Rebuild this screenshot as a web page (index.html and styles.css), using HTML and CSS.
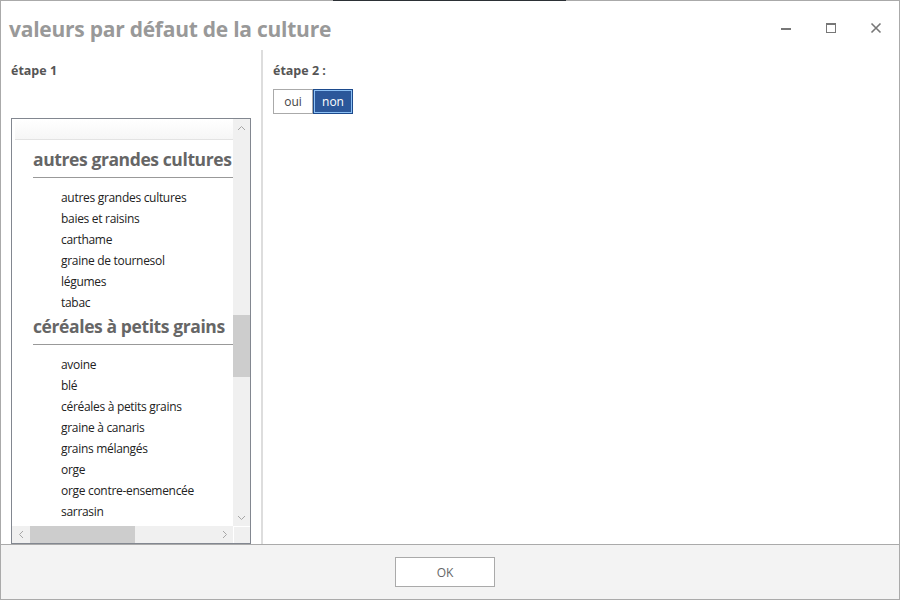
FILE: index.html
```html
<!DOCTYPE html>
<html lang="fr">
<head>
<meta charset="utf-8">
<title>valeurs par défaut de la culture</title>
<link rel="stylesheet" href="styles.css">
</head>
<body>
<div class="window">
  <div class="topedge"></div>
  <header class="titlebar">
    <h1 class="title">valeurs par défaut de la culture</h1>
    <div class="controls">
      <span class="ctl"><svg width="12" height="12" viewBox="0 0 12 12"><rect x="1" y="6" width="10" height="2" fill="#777"/></svg></span>
      <span class="ctl"><svg width="12" height="12" viewBox="0 0 12 12"><rect x="1.5" y="1.5" width="9" height="9" fill="none" stroke="#777"/><rect x="1" y="1" width="10" height="2" fill="#777"/></svg></span>
      <span class="ctl"><svg width="12" height="12" viewBox="0 0 12 12"><path d="M1.5 1.5 L10.5 10.5 M10.5 1.5 L1.5 10.5" stroke="#777" stroke-width="1.6"/></svg></span>
    </div>
  </header>
  <main class="body">
    <section class="pane left">
      <div class="step">étape 1</div>
      <div class="listbox">
        <div class="viewport">
          <div class="stickyhead"></div>
          <div class="content">
            <div class="group">
              <div class="ghead">autres grandes cultures</div>
              <ul class="items">
                <li>autres grandes cultures</li>
                <li>baies et raisins</li>
                <li>carthame</li>
                <li>graine de tournesol</li>
                <li>légumes</li>
                <li>tabac</li>
              </ul>
            </div>
            <div class="group">
              <div class="ghead">céréales à petits grains</div>
              <ul class="items">
                <li>avoine</li>
                <li>blé</li>
                <li>céréales à petits grains</li>
                <li>graine à canaris</li>
                <li>grains mélangés</li>
                <li>orge</li>
                <li>orge contre-ensemencée</li>
                <li>sarrasin</li>
              </ul>
            </div>
          </div>
        </div>
        <div class="vbar">
          <span class="arrow"><svg width="9" height="6" viewBox="0 0 9 6"><path d="M1 5 L4.5 1.5 L8 5" fill="none" stroke="#a6a6a6"/></svg></span>
          <div class="vtrack"><div class="vthumb"></div></div>
          <span class="arrow"><svg width="9" height="6" viewBox="0 0 9 6"><path d="M1 1 L4.5 4.5 L8 1" fill="none" stroke="#a6a6a6"/></svg></span>
        </div>
        <div class="hbar">
          <span class="arrow"><svg width="6" height="9" viewBox="0 0 6 9"><path d="M5 1 L1.5 4.5 L5 8" fill="none" stroke="#a6a6a6"/></svg></span>
          <div class="htrack"><div class="hthumb"></div></div>
          <span class="arrow"><svg width="6" height="9" viewBox="0 0 6 9"><path d="M1 1 L4.5 4.5 L1 8" fill="none" stroke="#a6a6a6"/></svg></span>
        </div>
        <div class="corner"></div>
      </div>
    </section>
    <section class="pane right">
      <div class="step">étape 2 :</div>
      <div class="toggle">
        <button class="opt">oui</button>
        <button class="opt on">non</button>
      </div>
    </section>
  </main>
  <footer class="footer">
    <button class="ok">OK</button>
  </footer>
</div>
</body>
</html>
```
FILE: styles.css
```css
* { box-sizing: border-box; }
html, body { margin: 0; padding: 0; background: #fff; }
body { font-family: "Open Sans", "Noto Sans", sans-serif; color: #222; }

.window {
  width: 900px;
  height: 600px;
  display: flex;
  flex-direction: column;
  border-left: 1px solid #aaa;
  border-right: 1px solid #aaa;
  border-bottom: 1px solid #aaa;
  background: #fff;
}
.topedge {
  height: 1px;
  margin: 0 -1px;
  background: linear-gradient(to right, #aaa 0, #aaa 333px, #2b3035 333px, #2b3035 566px, #aaa 566px);
}
.titlebar {
  height: 49px;
  display: flex;
  align-items: center;
  justify-content: space-between;
  padding-left: 8px;
  padding-right: 1px;
}
.title {
  margin: 0;
  font-size: 21px;
  font-weight: 700;
  color: #999;
  letter-spacing: -0.25px;
  padding-top: 6px;
}
.controls { display: flex; align-items: center; height: 100%; }
.ctl {
  width: 45px;
  height: 49px;
  display: flex;
  align-items: center;
  justify-content: center;
  padding-top: 4px;
}

.body {
  flex: 1;
  display: flex;
  min-height: 0;
}
.pane { display: flex; flex-direction: column; }
.left {
  width: 262px;
  border-right: 2px solid #ddd;
  padding: 10px 10px 0 10px;
}
.right { flex: 1; padding: 10px 0 0 10px; }
.step {
  font-size: 12.5px;
  font-weight: 700;
  color: #555;
  line-height: 22px;
}

.listbox {
  margin-top: 36px;
  flex: 1;
  width: 240px;
  border: 1px solid #828790;
  display: grid;
  grid-template-columns: 1fr 17px;
  grid-template-rows: 1fr 17px;
  min-height: 0;
}
.viewport {
  overflow: hidden;
  padding: 1px 0 0 3px;
}
.stickyhead {
  height: 20px;
  background: linear-gradient(#ffffff, #f6f6f6);
  border-bottom: 1px solid #e3e3e3;
}
.content { padding-top: 6px; white-space: nowrap; }
.ghead {
  margin: 1px -30px 9px 18px;
  font-size: 17.5px;
  line-height: 24px;
  font-weight: 700;
  color: #666;
  letter-spacing: -0.4px;
  padding-bottom: 6px;
  border-bottom: 1px solid #999;
}
.items { list-style: none; margin: 0; padding: 0 0 0 46px; }
.items li { font-size: 12px; line-height: 21px; color: #222; letter-spacing: -0.3px; }

.vbar {
  background: #f0f0f0;
  display: flex;
  flex-direction: column;
  align-items: center;
}
.vbar .arrow { height: 17px; display: flex; align-items: center; justify-content: center; width: 17px; }
.vtrack { flex: 1; width: 100%; padding-top: 179px; }
.vthumb { height: 62px; width: 100%; background: #cdcdcd; }

.hbar {
  background: #f0f0f0;
  display: flex;
  align-items: center;
}
.hbar .arrow { width: 17px; height: 17px; display: flex; align-items: center; justify-content: center; }
.htrack { flex: 1; height: 100%; }
.hthumb { margin-left: 1px; width: 105px; height: 100%; background: #cdcdcd; }
.corner { background: #f0f0f0; border-left: 1px solid #fff; border-top: 1px solid #fff; }

.toggle { display: flex; margin-top: 7px; }
.opt {
  font-family: inherit;
  font-size: 12px;
  width: 40px;
  height: 25px;
  margin: 0;
  padding: 0;
  background: #fff;
  border: 1px solid #aaa;
  color: #444;
}
.opt.on {
  width: 40px;
  background: #2b579a;
  color: #fff;
  border: 1px solid #1c4a8c;
  box-shadow: inset 0 0 0 1px #8cc0f4;
}

.footer {
  height: 55px;
  border-top: 1px solid #aaa;
  background: #f3f3f3;
  display: flex;
  justify-content: center;
  padding-top: 12px;
}
.ok {
  font-family: inherit;
  width: 100px;
  height: 30px;
  background: #fff;
  border: 1px solid #aaa;
  font-size: 12px;
  color: #666;
  margin: 0 10px 0 0;
}
```
